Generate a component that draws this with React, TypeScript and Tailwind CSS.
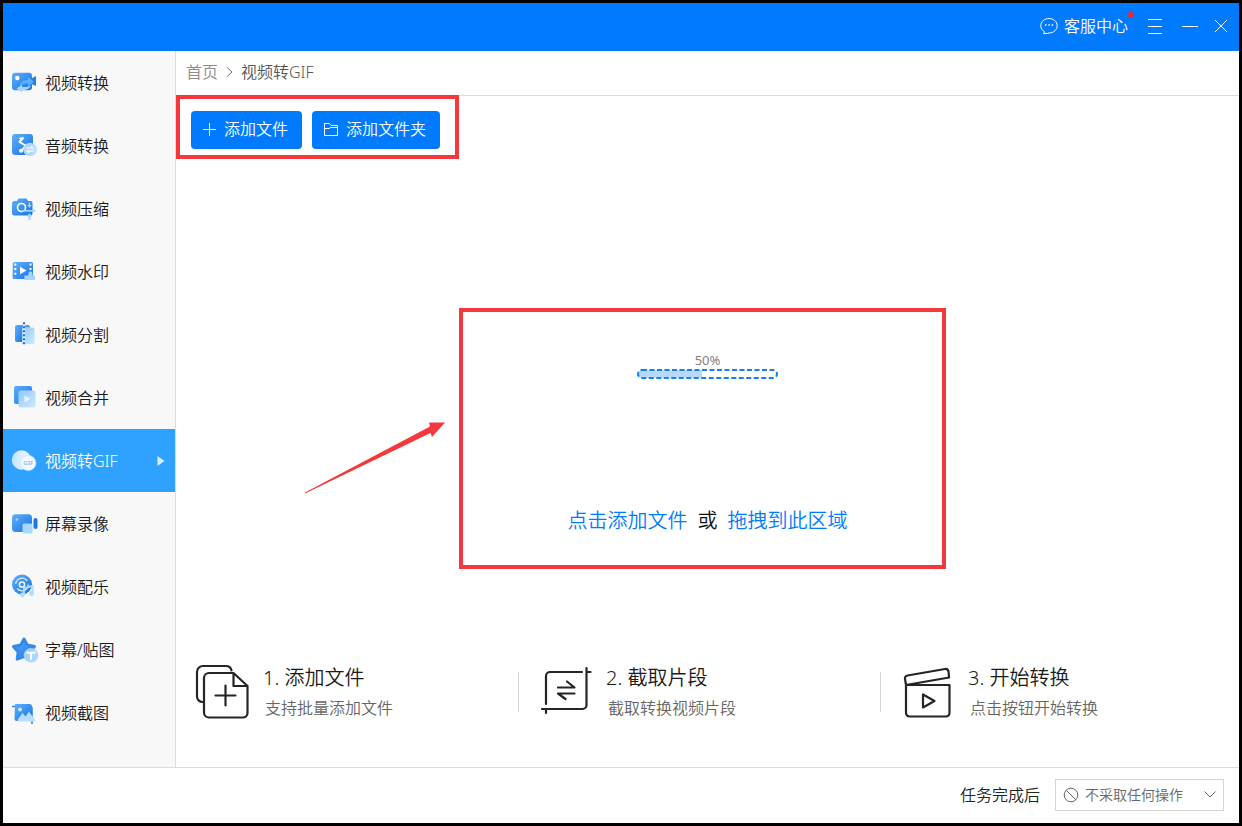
import type { ReactNode } from "react";

function Gradients() {
  return (
    <svg width="0" height="0" className="absolute" aria-hidden="true">
      <defs>
        <linearGradient id="deep" x1="0" y1="0" x2="1" y2="1">
          <stop offset="0" stopColor="#5fb0fb" />
          <stop offset="1" stopColor="#1672e2" />
        </linearGradient>
        <linearGradient id="pale" x1="0" y1="0" x2="1" y2="1">
          <stop offset="0" stopColor="#8fc8fd" />
          <stop offset="1" stopColor="#cfe9ff" />
        </linearGradient>
        <linearGradient id="white" x1="0" y1="0" x2="1" y2="0">
          <stop offset="0" stopColor="#c4e4ff" />
          <stop offset="1" stopColor="#f4faff" />
        </linearGradient>
      </defs>
    </svg>
  );
}

const items: { label: string; icon: ReactNode; active?: boolean }[] = [
  {
    label: "视频转换",
    icon: (
      <>
        <rect x="1" y="2.7" width="20" height="17.5" rx="3" fill="url(#deep)" />
        <path d="M20.5 8.5 25 6v10l-4.500-2z" fill="#1f7fe6" />
        <circle cx="6.300" cy="8" r="2.200" fill="#fff" />
        <path d="M9 16.500c0-4 3-6.500 8-6.500V7l6 4.700-6 4.800v-3.300c-3.500 0-6 .8-8 3.300z" fill="#59b1fb" />
        <path d="M5.500 18.500 11 14.800v2.200c3 .3 6.500 0 9-1.500-1.500 3.300-5 4.800-9 4.800v2.400z" fill="#a5d5ff" />
      </>
    ),
  },
  {
    label: "音频转换",
    icon: (
      <>
        <rect x="1" y="1" width="21" height="21" rx="3" fill="url(#deep)" />
        <path d="M12.500 4.500 8.500 9l6 3.500-4 5.500M12.500 4.500c-1.500 1.200-3 1.300-4 .5" fill="none" stroke="#fff" strokeWidth="1.900" strokeLinejoin="round" />
        <circle cx="10" cy="17.800" r="2" fill="#fff" />
        <circle cx="19" cy="16.500" r="6.800" fill="#b3dbff" opacity=".95" />
        <path d="M15.500 15h6.500l-2-2M22.500 18H16l2 2" fill="none" stroke="#eff8ff" strokeWidth="1.300" />
      </>
    ),
  },
  {
    label: "视频压缩",
    icon: (
      <>
        <path d="M3.500 5H6l1.500-2.500h8L17 5h2.500a2 2 0 0 1 2 2v10.500a2 2 0 0 1-2 2h-16a2.500 2.500 0 0 1-2.500-2.500V7.500A2.500 2.500 0 0 1 3.500 5z" fill="url(#deep)" />
        <circle cx="10.500" cy="11.500" r="4" fill="none" stroke="#fff" strokeWidth="1.600" />
        <path d="M11 14.800h13.500" stroke="#9fd2ff" strokeWidth="1.800" />
        <path d="m16 9 2.500 3L21 9h-1.700V6.500h-1.600V9zM15.500 20.500l3-3.500 3 3.500h-2V24h-2v-3.500z" fill="#9fd2ff" />
      </>
    ),
  },
  {
    label: "视频水印",
    icon: (
      <>
        <rect x="1.700" y="3" width="20.300" height="17" rx="1.500" fill="url(#deep)" />
        <path d="M4.300 4.500v14M19.500 4.500v11" stroke="#fff" strokeWidth="2" strokeDasharray="2 2.600" />
        <path d="m9 7.800 6.500 3.700L9 15.200z" fill="#fff" />
        <path d="M17.500 14a2 2 0 0 1 3.800 0l.2 2.500h2.500v4.500H13.500v-4.500h3.800z" fill="#a5d5ff" />
      </>
    ),
  },
  {
    label: "视频分割",
    icon: (
      <>
        <path d="M6 3h7v17H6a2 2 0 0 1-2-2V5a2 2 0 0 1 2-2z" fill="url(#deep)" />
        <path d="M13 5.500h8.500a2 2 0 0 1 2 2V20a2 2 0 0 1-2 2H11V5.500z" fill="url(#pale)" />
        <path d="M17 3a2 2 0 0 1 2 2.500h-6V3z" fill="#4b9df0" />
        <path d="M13 2v20" stroke="#e6f4ff" strokeWidth="2.200" />
        <path d="M13 .3v24" stroke="#1a6fd0" strokeWidth="2" strokeDasharray="2 2" />
      </>
    ),
  },
  {
    label: "视频合并",
    icon: (
      <>
        <rect x="3" y="1" width="18" height="18" rx="2" fill="url(#deep)" />
        <rect x="7.500" y="5.500" width="17" height="17" rx="2" fill="url(#pale)" />
        <path d="m13.500 10.500 6 3.500-6 3.500z" fill="#e7f5ff" />
      </>
    ),
  },
  {
    label: "视频转GIF",
    active: true,
    icon: (
      <>
        <circle cx="10.500" cy="12" r="9.700" fill="url(#white)" />
        <circle cx="17.300" cy="15" r="7.600" fill="#f1f9ff" stroke="#c7e5fc" strokeWidth=".6" />
        <text x="17.300" y="17" textAnchor="middle" fontSize="6" fontWeight="700" fill="#93c3ea">GIF</text>
      </>
    ),
  },
  {
    label: "屏幕录像",
    icon: (
      <>
        <rect x="1" y="3.300" width="20" height="17.700" rx="3.500" fill="url(#deep)" />
        <rect x="22.500" y="7" width="4" height="11" rx="2" fill="#1c79e4" />
        <rect x="11.500" y="12.500" width="10" height="10" rx="1.500" fill="#a8d6ff" />
        <circle cx="6" cy="8.500" r="1.300" fill="#9bd0ff" />
      </>
    ),
  },
  {
    label: "视频配乐",
    icon: (
      <>
        <circle cx="11" cy="10.500" r="10" fill="url(#deep)" />
        <circle cx="11" cy="10.500" r="6.300" fill="none" stroke="#d7edff" strokeWidth="1.300" strokeDasharray="15 4.800" />
        <circle cx="11" cy="10.500" r="2.600" fill="none" stroke="#eef8ff" strokeWidth="1.500" />
        <path d="M13 20.500V14l8.500-2v7.500" fill="none" stroke="#b0daff" strokeWidth="2" />
        <circle cx="11.500" cy="20.800" r="2.400" fill="#b0daff" />
        <circle cx="20.500" cy="19.500" r="2.400" fill="#b0daff" />
      </>
    ),
  },
  {
    label: "字幕/贴图",
    icon: (
      <>
        <path d="m13 2 3.200 6 7.300 1.500-4.700 5.500 1 7.200-6.800-2.700-6.800 2.700 1-7.200-4.700-5.500L9.800 8z" fill="url(#deep)" stroke="#338ced" strokeWidth="3" strokeLinejoin="round" />
        <circle cx="20" cy="18.300" r="7.300" fill="#a9d5ff" opacity=".96" />
        <path d="M15.500 15.800h9M20 15.800v7" stroke="#fff" strokeWidth="2" />
      </>
    ),
  },
  {
    label: "视频截图",
    icon: (
      <>
        <path d="M1 6.500h18a2 2 0 0 1 2 2V24" fill="none" stroke="#2384ef" strokeWidth="1.500" />
        <path d="M4 4h14.500A2.500 2.500 0 0 1 21 6.500V21H6a2.500 2.500 0 0 1-2.500-2.500z" fill="url(#deep)" />
        <circle cx="9" cy="9.500" r="2" fill="#c8e6ff" />
        <path d="m6.500 20 5-7 3 3.500 3.500-5 6 8.500v1.500H7.500z" fill="#b6ddff" />
      </>
    ),
  },
];

function Sidebar() {
  return (
    <nav className="w-[173px] shrink-0 border-r border-[#dcdcdc] bg-[#f8f8f8]">
      {items.map((it) => (
        <a
          key={it.label}
          href="#"
          className={
            it.active
              ? "flex h-[63px] items-center gap-2 bg-[#2fa2ff] pr-2.5 pl-2 text-white"
              : "flex h-[63px] items-center gap-2 pr-2.5 pl-2 text-[#1a1a1a]"
          }
        >
          <svg viewBox="0 0 26 26" className="size-[26px] shrink-0 overflow-visible" aria-hidden="true">
            {it.icon}
          </svg>
          <span>{it.label}</span>
          {it.active && (
            <svg viewBox="0 0 8 10" className="ml-auto h-2.5 w-2" aria-hidden="true">
              <path d="M.5 0 7.500 5 .5 10z" fill="#d9edfc" />
            </svg>
          )}
        </a>
      ))}
    </nav>
  );
}

function Header() {
  return (
    <header className="flex h-12 items-center justify-end bg-[#007bff] pr-[11px] pb-0.5 text-white">
      <button className="relative flex items-center gap-1.5">
        <svg viewBox="0 0 18 18" className="size-[18px]" fill="none" stroke="currentColor" aria-hidden="true">
          <path d="M3.200 16.300c1-.3 1.500-.9 1.400-1.500C2.300 13.600.8 11.400.8 8.800.8 4.800 4.500 1.500 9 1.500s8.200 3.200 8.200 7.200S13.500 16 9 16c-1.800.5-4 .8-5.800.3z" />
          <path d="M5 8h1.500M8.300 8h1.500M11.600 8h1.500" strokeWidth="1.500" />
        </svg>
        <span>客服中心</span>
        <span className="absolute -top-0.5 -right-1.5 size-1.5 rounded-full bg-[#f5222d]" />
      </button>
      <button aria-label="菜单" className="ml-5">
        <svg viewBox="0 0 14 16" className="h-4 w-3.5" stroke="currentColor" aria-hidden="true">
          <path d="M0 1.500h14M0 8.500h14M0 15.500h14" />
        </svg>
      </button>
      <button aria-label="最小化" className="ml-5">
        <svg viewBox="0 0 16 16" className="size-4" stroke="currentColor" aria-hidden="true">
          <path d="M0 8.500h16" />
        </svg>
      </button>
      <button aria-label="关闭" className="ml-4">
        <svg viewBox="0 0 14 14" className="size-3.5" stroke="currentColor" aria-hidden="true">
          <path d="m1 1 12 12M13 1 1 13" />
        </svg>
      </button>
    </header>
  );
}

const steps = [
  {
    title: "1. 添加文件",
    text: "支持批量添加文件",
    icon: (
      <>
        <path d="M7 37H6.500C3.500 37 1 34.500 1 31.500V7c0-3.300 2.700-6 6-6h23c3 0 5 2 5.500 4.500" />
        <path d="M37.500 8H13a5 5 0 0 0-5 5v34.500a5 5 0 0 0 5 5h34a4.500 4.500 0 0 0 4.500-4.500V21zM37.500 8v13h14" />
        <path d="M29.500 20.500v20M19.500 30.500h20" />
      </>
    ),
  },
  {
    title: "2. 截取片段",
    text: "截取转换视频片段",
    icon: (
      <>
        <path d="M4 38V10a4 4 0 0 1 4-4h32M44.500 2v37a4 4 0 0 1-4 4H0M4 43v4M44.500 6h4" />
        <path d="M16 21.500h16.500L25 15.500M32.500 27.500H16l7.500 5.500" />
      </>
    ),
  },
  {
    title: "3. 开始转换",
    text: "点击按钮开始转换",
    icon: (
      <>
        <path d="M2 19 1 13c-.3-2 .7-3 2.500-3.500L41 3c2-.3 3 .5 3.500 2.500l.6 6z" />
        <path d="M2 19h43.500v28a3.500 3.500 0 0 1-3.500 3.500H5.500A3.500 3.500 0 0 1 2 47z" />
        <path d="M19 28.500v13l11.500-6.500z" />
      </>
    ),
  },
];

function Steps() {
  return (
    <ol className="grid grid-cols-[343fr_362fr_358fr] pb-[45px]">
      {steps.map((s, i) => (
        <li key={s.title} className="flex h-[60px] items-center justify-between pl-5">
          <div className="flex items-center gap-[13px]">
            <svg viewBox="0 0 54 54" className="size-[54px] overflow-visible" fill="none" stroke="#252525" strokeWidth="2.200" strokeLinejoin="round" strokeLinecap="round" aria-hidden="true">
              <g transform={i === 0 ? undefined : "translate(3 1)"}>{s.icon}</g>
            </svg>
            <div>
              <h2 className="text-xl leading-8 text-[#1a1a1a]">{s.title}</h2>
              <p className="pl-0.5 leading-7 text-[#666]">{s.text}</p>
            </div>
          </div>
          {i < 2 && <span className="h-10 w-px bg-[#d8d8d8]" />}
        </li>
      ))}
    </ol>
  );
}

function DropArea() {
  return (
    <section className="flex flex-1 items-center justify-center pt-14 pr-2.5">
      <div className="relative flex h-[261px] w-[487px] flex-col items-center border-4 border-[#f5383c] pt-[39px] pb-7 pl-2.5">
        <span className="text-[13px] leading-[18px] font-normal text-[#808080]">50%</span>
        <svg viewBox="0 0 141 10" className="h-2.5 w-[141px]" role="img" aria-label="50%">
          <path d="M5 1h60v8H5a4 4 0 0 1 0-8z" fill="#b9d9fc" />
          <rect x="1" y="1" width="139" height="8" rx="4" fill="none" stroke="#1880ee" strokeWidth="2" strokeDasharray="5 2.500" />
        </svg>
        <p className="mt-auto flex gap-2.5 text-xl leading-8 text-[#111]">
          <button className="text-[#007bff]">点击添加文件</button>
          <span>或</span>
          <button className="text-[#007bff]">拖拽到此区域</button>
        </p>
        <svg viewBox="0 0 140 72" className="absolute top-[110px] right-full mr-[18px] h-[72px] w-[140px]" aria-hidden="true">
          <path d="M0 70.500v1L125.500 11l1.500 4L140 .5h-16l1 4z" fill="#f5383c" />
        </svg>
      </div>
    </section>
  );
}

export default function App() {
  return (
    <div className="flex min-h-screen flex-col border-[3px] border-black bg-white font-['Noto_Sans','Noto_Sans_CJK_SC',sans-serif] text-base font-[350]">
      <Gradients />
      <Header />
      <div className="flex flex-1">
        <Sidebar />
        <main className="flex flex-1 flex-col">
          <div className="flex h-[45px] items-center gap-2 border-b border-[#dcdcdc] pb-0.5 pl-2.5">
            <a href="#" className="text-[#8c8c8c]">首页</a>
            <svg viewBox="0 0 7 10" className="h-2.5 w-[7px]" fill="none" stroke="#777" aria-hidden="true">
              <path d="m1 .5 5 4.500-5 4.500" />
            </svg>
            <span className="text-[#555]">视频转GIF</span>
          </div>
          <div className="-mt-px flex gap-2.5 self-start border-4 border-[#f5383c] pt-3 pr-[15px] pb-1.5 pl-[11px] text-white">
            <button className="flex h-[38px] items-center gap-2 rounded bg-[#007bff] pr-3.5 pb-0.5 pl-3">
              <svg viewBox="0 0 13 13" className="size-[13px]" stroke="currentColor" aria-hidden="true">
                <path d="M6.500 0v13M0 6.500h13" />
              </svg>
              添加文件
            </button>
            <button className="flex h-[38px] items-center gap-2 rounded bg-[#007bff] pr-3.5 pb-0.5 pl-3">
              <svg viewBox="0 0 14 13" className="h-[13px] w-3.5" fill="none" stroke="currentColor" aria-hidden="true">
                <path d="M.5 12.500V.5h5l1.500 2h6.500v10zM.5 5.500H5l1.500-1h7" />
              </svg>
              添加文件夹
            </button>
          </div>
          <DropArea />
          <Steps />
        </main>
      </div>
      <footer className="flex h-14 items-center justify-end gap-[15px] border-t border-[#dcdcdc] pr-[15px] pb-0.5">
        <label htmlFor="after" className="text-[#222]">任务完成后</label>
        <div className="relative flex items-center text-[#666]">
          <select id="after" className="h-8 w-[169px] appearance-none border border-[#d5d5d5] bg-white pl-[29px] text-sm">
            <option>不采取任何操作</option>
          </select>
          <svg viewBox="0 0 16 16" className="pointer-events-none absolute left-2 size-4" fill="none" stroke="currentColor" aria-hidden="true">
            <circle cx="8" cy="8" r="6.800" />
            <path d="m3.300 3.300 9.400 9.400" />
          </svg>
          <svg viewBox="0 0 12 7" className="pointer-events-none absolute right-2 h-[7px] w-3" fill="none" stroke="currentColor" aria-hidden="true">
            <path d="m.5.5 5.500 5.500 5.500-5.500" />
          </svg>
        </div>
      </footer>
    </div>
  );
}
